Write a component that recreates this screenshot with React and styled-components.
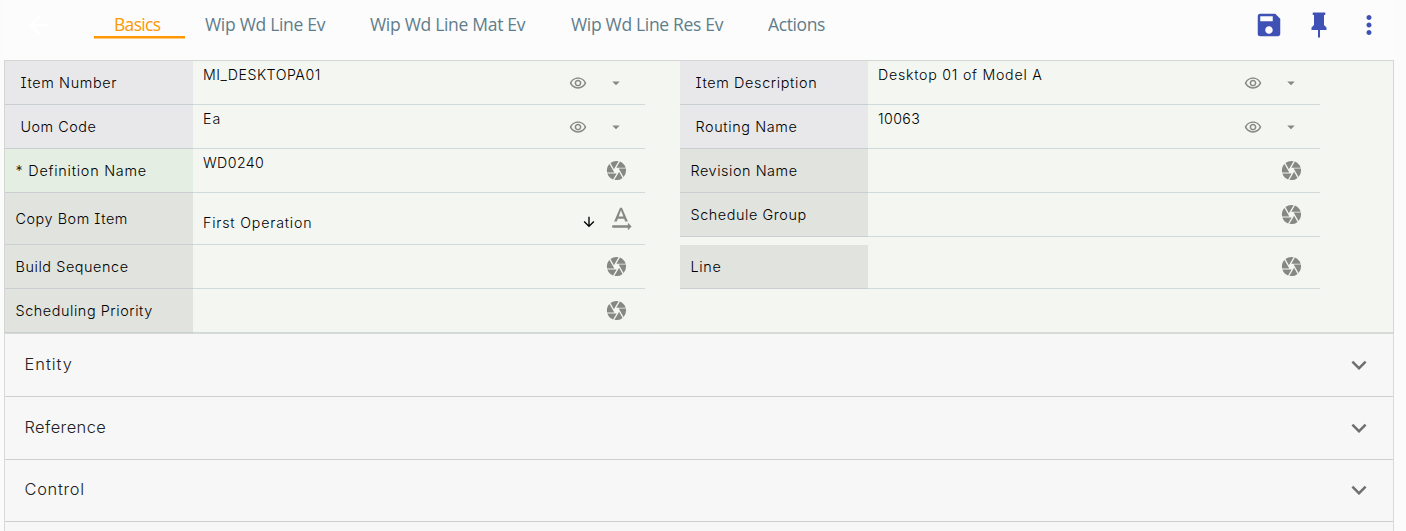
import React from "react";
import styled, { createGlobalStyle } from "styled-components";
import {
  MdArrowBack, MdSave, MdMoreVert, MdCamera, MdOutlineRemoveRedEye,
  MdArrowDropDown, MdArrowDownward, MdTextRotationNone, MdExpandMore,
} from "react-icons/md";

const GlobalStyle = createGlobalStyle`
  * { box-sizing: border-box; }
  html, body { margin: 0; height: 531px; overflow: hidden; background: #fbfbfb; }
  body { font-family: Inter, "Liberation Sans", sans-serif; font-weight: 300; color: #000; }
  svg { display: block; flex: none; }
`;

const Page = styled.main`
  width: 1406px;
  height: 531px;
  padding: 0 12px 0 4px;
  overflow: hidden;
`;

const Toolbar = styled.header`
  display: flex;
  align-items: center;
  height: 60px;
  padding: 0 10px 10px 20px;
  background: #fcfcfc;
`;

const BackIcon = styled(MdArrowBack)`
  color: #fff;
`;

const Tabs = styled.nav`
  display: flex;
  flex: 1;
  align-self: stretch;
  margin-left: 40px;
`;

const Tab = styled.span`
  display: flex;
  width: ${(p) => p.$width}px;
  height: 38px;
  padding: 9px 0 0 20px;
  line-height: 30px;
  white-space: nowrap;
  font-family: "Open Sans", "Noto Sans", sans-serif;
  font-weight: 400;
  font-size: 17.5px;
  letter-spacing: ${(p) => p.$track}px;
  color: ${(p) => (p.$active ? "#ff9800" : "#607d8b")};
  box-shadow: ${(p) => (p.$active ? "inset 0 -2px 0 #ff9800, 0 1px 0 #ffc880" : "none")};
`;

const ToolActions = styled.div`
  display: flex;
  gap: 20px;
  color: #3f51b5;
`;

const Panel = styled.section`
  display: grid;
  grid-template-columns: 640px 640px;
  grid-template-rows: 44px 44px 44px 52px 44px 44px;
  column-gap: 35px;
  height: 274px;
  background: #f4f6f1;
  border: 1px solid #d3d6d3;
  border-bottom-width: 0;
  box-shadow: inset 0 -2px 0 #d8dad7;
`;

const tones = { info: "#e8e8eb", required: "#e4eee2", plain: "#e1e3de" };

const Field = styled.div`
  display: flex;
  height: ${(p) => (p.$tall ? 52 : 44)}px;
  border-bottom: 1px solid #d1dadb;
`;

const FieldLabel = styled.label`
  display: flex;
  align-items: center;
  width: 188px;
  padding-left: ${(p) => (p.$tone === "info" ? 15.5 : 10.5)}px;
  background: ${(p) => tones[p.$tone]};
  box-shadow: 0 1px 0 #c9cfd1;
  font-size: 14.4px;
  letter-spacing: ${(p) => p.$track}px;
  white-space: pre;
  font-feature-settings: "cv08" 1;
`;

const FieldValue = styled.span`
  flex: 1;
  padding: ${(p) => (p.$tall ? "20px" : "4px")} 0 0 10px;
  font-size: 14.2px;
  line-height: 20px;
  letter-spacing: ${(p) => p.$track}px;
`;

const FieldIcons = styled.div`
  display: flex;
  align-items: center;
  gap: ${(p) => p.$gap}px;
  padding-right: ${(p) => p.$end}px;
  padding-top: ${(p) => p.$top || 0}px;
  color: #868883;
`;

const DownArrow = styled(MdArrowDownward)`
  color: #000;
  margin-top: 7px;
`;

const Accordion = styled.div`
  border: 1px solid #d9dada;
  border-top: 0;
`;

const AccordionRow = styled.div`
  display: flex;
  align-items: center;
  justify-content: space-between;
  height: ${(p) => p.$height}px;
  padding: 0 19px 1px;
  background: #f7f7f7;
  border-bottom: 1px solid #cfcfcf;
  font-size: 16.4px;
  letter-spacing: ${(p) => p.$track}px;
  color: #212121;
  svg { color: #6f6f6f; }
`;

const SectionTitle = styled.span`
  padding: 0 0 ${(p) => (p.$lift ? 3 : 1)}px 0.5px;
`;

const PinIcon = () => (
  <svg width="30" height="30" viewBox="0 0 24 24" fill="currentColor">
    <path d="M16 12V4h1V2H7v2h1v8l-2 2v2h5.2v6h1.6v-6H18v-2l-2-2z" />
  </svg>
);

const TABS = [
  { text: "Basics", width: 91, track: -0.7, active: true },
  { text: "Wip Wd Line Ev", width: 165, track: -0.3 },
  { text: "Wip Wd Line Mat Ev", width: 201, track: -0.3 },
  { text: "Wip Wd Line Res Ev", width: 197, track: -0.32 },
  { text: "Actions", width: 98, track: -0.4 },
];

const FIELDS = [
  { label: "Item Number", value: "MI_DESKTOPA01", tone: "info", kind: "view", lt: 0.64, vt: 0.5 },
  { label: "Item Description", value: "Desktop 01 of Model A", tone: "info", kind: "view", lt: 0.64, vt: 0.75 },
  { label: "Uom Code", value: "Ea", tone: "info", kind: "view", lt: 0.5, vt: 1 },
  { label: "Routing Name", value: "10063", tone: "info", kind: "view", lt: 0.62, vt: 0.4 },
  { label: "* Definition Name", value: "WD0240", tone: "required", kind: "lens", lt: 0.76, vt: 0.4 },
  { label: "Revision Name", value: "", tone: "plain", kind: "lens", lt: 0.55, vt: 0.5 },
  { label: "Copy Bom Item", value: "First Operation", tone: "plain", kind: "text", lt: 0.55, vt: 0.82 },
  { label: "Schedule Group", value: "", tone: "plain", kind: "lens", lt: 0.58, vt: 0.5 },
  { label: "Build Sequence", value: "", tone: "plain", kind: "lens", lt: 0.58, vt: 0.5 },
  { label: "Line", value: "", tone: "plain", kind: "lens", lt: 0.65, vt: 0.5 },
  { label: "Scheduling Priority", value: "", tone: "plain", kind: "lens", lt: 0.57, vt: 0.5 },
];

const SECTIONS = [
  { title: "Entity", height: 63, track: 1 },
  { title: "Reference", height: 63, track: 0.42 },
  { title: "Control", height: 62, track: 0.7, lift: true },
  { title: "", height: 60, track: 0 },
];

function Icons({ kind }) {
  if (kind === "view") {
    return (
      <FieldIcons $gap={20} $end={20} $top={1}>
        <MdOutlineRemoveRedEye size={18} />
        <MdArrowDropDown size={18} />
      </FieldIcons>
    );
  }
  if (kind === "text") {
    return (
      <FieldIcons $gap={9} $end={9.5}>
        <DownArrow size={16} />
        <MdTextRotationNone size={30} />
      </FieldIcons>
    );
  }
  return (
    <FieldIcons $gap={0} $end={17}>
      <MdCamera size={23} />
    </FieldIcons>
  );
}

export default function App() {
  return (
    <Page>
      <GlobalStyle />
      <Toolbar>
        <BackIcon size={30} />
        <Tabs>
          {TABS.map((t) => (
            <Tab key={t.text} $active={t.active} $width={t.width} $track={t.track}>{t.text}</Tab>
          ))}
        </Tabs>
        <ToolActions>
          <MdSave size={30} />
          <PinIcon />
          <MdMoreVert size={30} />
        </ToolActions>
      </Toolbar>
      <Panel>
        {FIELDS.map((f) => (
          <Field key={f.label} $tall={f.kind === "text"}>
            <FieldLabel $tone={f.tone} $track={f.lt}>{f.label}</FieldLabel>
            <FieldValue $tall={f.kind === "text"} $track={f.vt}>{f.value}</FieldValue>
            <Icons kind={f.kind} />
          </Field>
        ))}
      </Panel>
      <Accordion>
        {SECTIONS.map((s) => (
          <AccordionRow key={s.height + s.title} $height={s.height} $track={s.track}>
            <SectionTitle $lift={s.lift}>{s.title}</SectionTitle>
            <MdExpandMore size={30} />
          </AccordionRow>
        ))}
      </Accordion>
    </Page>
  );
}
